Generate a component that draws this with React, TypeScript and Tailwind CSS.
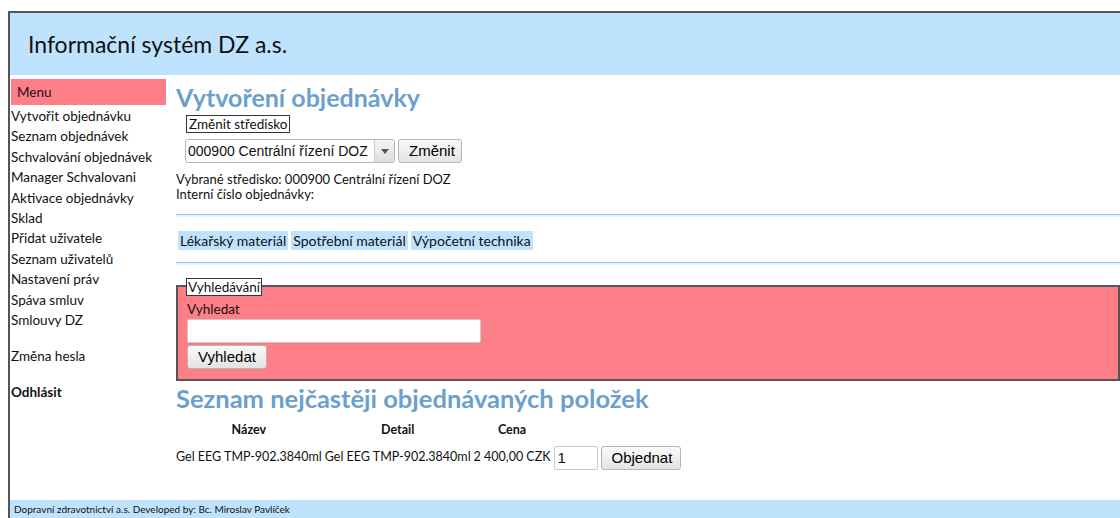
import React from "react";

const menu = [
  "Vytvořit objednávku",
  "Seznam objednávek",
  "Schvalování objednávek",
  "Manager Schvalovani",
  "Aktivace objednávky",
  "Sklad",
  "Přidat uživatele",
  "Seznam uživatelů",
  "Nastavení práv",
  "Spáva smluv",
  "Smlouvy DZ",
];

const font = { fontFamily: "Lato, 'Open Sans', sans-serif" };
const btnFont = { fontFamily: "'Liberation Sans', Arial, sans-serif" };

function Btn({ children, className = "" }: { children: React.ReactNode; className?: string }) {
  return (
    <button
      style={btnFont}
      className={`h-[24px] rounded-[3px] border border-[#b5b5b5] bg-gradient-to-b from-[#fafafa] to-[#e3e3e3] px-[10px] text-[15px] text-black ${className}`}
    >
      {children}
    </button>
  );
}

export default function App() {
  return (
    <div style={font} className="h-[518px] w-[1120px] overflow-hidden bg-white pl-[8px] pt-[11px] text-[#111]">
      <div className="flex h-full flex-col border-l-2 border-t-2 border-[#555]">
        <header className="flex h-[62px] items-center bg-[#bfe3fd] pl-[18px] text-[23px] text-[#111]">
          Informační systém DZ a.s.
        </header>

        <div className="flex flex-1">
          <aside className="w-[156px] shrink-0 pl-[1px] pt-[4px] text-[13.5px]">
            <div className="flex h-[26px] items-center bg-[#ff7f89] pl-[6px]">Menu</div>
            <ul className="mt-[1px]">
              {menu.map((m) => (
                <li key={m} className="h-[20.4px] whitespace-nowrap leading-[20px]">{m}</li>
              ))}
            </ul>
            <div className="mt-[16px] leading-[20px]">Změna hesla</div>
            <div className="mt-[16px] font-bold leading-[20px]">Odhlásit</div>
          </aside>

          <main className="flex-1 pl-[10px] pt-[8px]">
            <h1 className="text-[25px] font-bold leading-[28px] text-[#6a9fcf]">Vytvoření objednávky</h1>
            <div className="ml-[10px] mt-[2px] inline-block border border-[#333] px-[2px] text-[13.5px] leading-[16px]">
              Změnit středisko
            </div>
            <div className="ml-[9px] mt-[4px] flex items-center gap-[3px]">
              <div
                style={btnFont}
                className="flex h-[24px] w-[210px] items-center justify-between overflow-hidden whitespace-nowrap rounded-[3px] border border-[#b5b5b5] bg-white pl-[2px] text-[14px]"
              >
                <span>000900 Centrální řízení DOZ</span>
                <span className="flex h-full w-[20px] shrink-0 items-center justify-center border-l border-[#ccc] bg-gradient-to-b from-[#f5f5f5] to-[#dedede]">
                  <svg width="8" height="5" viewBox="0 0 8 5"><path d="M0 0h8L4 5z" fill="#555" /></svg>
                </span>
              </div>
              <Btn className="w-[64px] px-0">Změnit</Btn>
            </div>
            <div className="mt-[9px] text-[13px] leading-[15px]">
              <div>Vybrané středisko: 000900 Centrální řízení DOZ</div>
              <div>Interní číslo objednávky:</div>
            </div>
            <div className="mt-[12px] h-[3px] border-t border-[#9fc0da] bg-[#e6f1fa]" />
            <div className="mt-[14px] flex gap-[3px] pl-[2px] text-[14px]">
              {["Lékařský materiál", "Spotřební materiál", "Výpočetní technika"].map((t) => (
                <span key={t} className="bg-[#bfe3fd] px-[2px] leading-[19px]">{t}</span>
              ))}
            </div>
            <div className="mt-[12px] h-[3px] border-t border-[#9fc0da] bg-[#e6f1fa]" />

            <div className="relative mt-[20px] h-[96px] border-2 border-[#555] bg-[#ff7f89] pl-[9px] pt-[14px] text-[13.5px]">
              <span className="absolute left-[8px] top-[-9px] border border-[#333] bg-white px-[1px] leading-[16px]">
                Vyhledávání
              </span>
              <div className="leading-[16px]">Vyhledat</div>
              <input className="mt-[2px] block h-[24px] w-[294px] rounded-[2px] border border-[#c8c8c8] bg-white" />
              <Btn className="mt-[2px] block w-[80px] px-0">Vyhledat</Btn>
            </div>

            <h2 className="mt-[3px] text-[25.5px] font-bold leading-[28px] text-[#6a9fcf]">
              Seznam nejčastěji objednávaných položek
            </h2>
            <table className="mt-[8px] border-separate border-spacing-x-[3px] text-[12.5px]" style={{ marginLeft: -3 }}>
              <thead>
                <tr className="h-[20px] font-bold">
                  <th>Název</th>
                  <th>Detail</th>
                  <th>Cena</th>
                  <th />
                  <th />
                </tr>
              </thead>
              <tbody>
                <tr className="h-[35px]">
                  <td>Gel EEG TMP-902.3840ml</td>
                  <td>Gel EEG TMP-902.3840ml</td>
                  <td>2 400,00 CZK</td>
                  <td className="px-0">
                    <input
                      style={btnFont}
                      defaultValue="1"
                      className="h-[24px] w-[44px] rounded-[2px] border border-[#c8c8c8] pl-[3px] text-[15px]"
                    />
                  </td>
                  <td>
                    <Btn className="w-[80px] px-0">Objednat</Btn>
                  </td>
                </tr>
              </tbody>
            </table>
          </main>
        </div>

        <footer className="flex h-[18px] items-center bg-[#bfe3fd] pl-[4px] text-[10px]">
          Dopravní zdravotnictví a.s. Developed by: Bc. Miroslav Pavlíček
        </footer>
      </div>
    </div>
  );
}
